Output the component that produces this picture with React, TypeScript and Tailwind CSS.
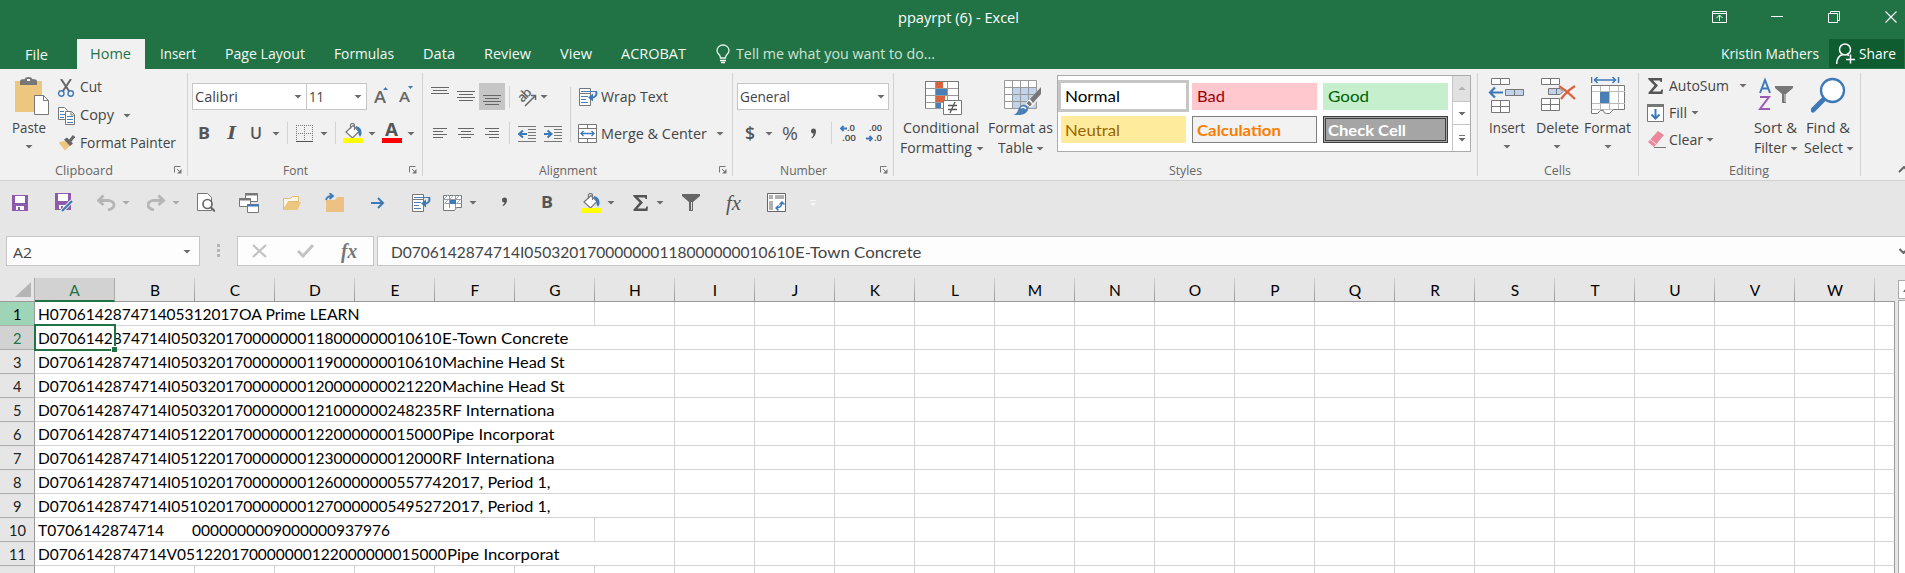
import React, { useLayoutEffect, useRef } from 'react';

function Fit({ w, className = '', children }: { w: number; className?: string; children: React.ReactNode }) {
  const ref = useRef<HTMLSpanElement>(null);
  useLayoutEffect(() => {
    const el = ref.current;
    if (!el) return;
    el.style.transform = 'none';
    const natural = el.getBoundingClientRect().width;
    if (natural > 0) el.style.transform = `scaleX(${w / natural})`;
  }, [w, children]);
  return (
    <span className={`block h-5 shrink-0 leading-5 whitespace-pre ${className}`} style={{ width: w }}>
      <span ref={ref} className="inline-block origin-left">{children}</span>
    </span>
  );
}

type SvgProps = { box: string; className?: string; children: React.ReactNode };
function Icon({ box, className = '', children }: SvgProps) {
  const [, , w, h] = box.split(' ');
  return (
    <svg width={w} height={h} viewBox={box} fill="none" className={`block shrink-0 ${className}`}>
      {children}
    </svg>
  );
}

function Arrow({ className = '' }: { className?: string }) {
  return (
    <svg width="6" height="3" viewBox="0 0 6 3" className={`block shrink-0 overflow-visible text-[#6a6a6a] ${className}`}>
      <path d="M-.500 0h7L3 3.600z" fill="currentColor" />
    </svg>
  );
}

function Sep({ className = '' }: { className?: string }) {
  return <div className={`w-px shrink-0 bg-[#d2d2d2] ${className}`} />;
}

function Launcher({ className = '' }: { className?: string }) {
  return (
    <Icon box="0 0 8 8" className={className}>
      <path d="M.5 6.500V.5H6.500M3 3l3 3" stroke="#777" />
      <path d="M7.500 3v4.500H3z" fill="#777" />
    </Icon>
  );
}

function Bucket({ className = '' }: { className?: string }) {
  return (
    <Icon box="343 123 20 20" className={className}>
      <path d="M346 132l7-6.500 6 6-6.500 6.500z" fill="#fff" stroke="#777" strokeWidth="1.200" />
      <path d="M350.500 129v-4q0-1.500 2-1.500t2 1.500v5" stroke="#777" strokeWidth="1.200" />
      <path d="M356 126q6 1 5.500 8l-1.500 3-1.500-3q.5-4-2.500-6z" fill="#3d79b8" />
      <path d="M343 138h20v5h-20z" fill="#ff0" />
    </Icon>
  );
}

function WrapIcon({ className = '' }: { className?: string }) {
  return (
    <Icon box="579 87 19 18" className={className}>
      <path d="M579.500 87.500h11v5h-11zM579.500 92.500h11v12h-11z" fill="#fff" stroke="#777" />
      <path d="M581 90.500h15M581 95.500h7M581 98.500h5M581 101.500h7" stroke="#4a7fb5" />
      <path d="M596 90q2 6-5 7" stroke="#3d79b8" strokeWidth="2" />
      <path d="M588 96.500l5-4v8z" fill="#3d79b8" />
    </Icon>
  );
}

function Sigma({ className = '' }: { className?: string }) {
  return (
    <Icon box="1648 77 15 16" className={className}>
      <path d="M1648 77h14v4h-1.500l-.5-1.500h-7l5 5-5.500 6h8l1-2h1.500l-.5 4.500h-14v-1.500l6-7-6-6z" fill="#555" />
    </Icon>
  );
}

function Lines({ box, d, className = '' }: { box: string; d: string; className?: string }) {
  return (
    <Icon box={box} className={className}>
      <path d={d} stroke="#666" />
    </Icon>
  );
}

const label = 'text-[13.500px] text-[#666]';

function TitleBar() {
  return (
    <div className="flex h-[39px] items-start bg-[#217346] text-white">
      <Fit w={121} className="mt-[8px] ml-[898px] text-[14.500px]">ppayrpt (6) - Excel</Fit>
      <Icon box="1712 11 15 12" className="mt-[11px] ml-[693px]">
        <path d="M1712.500 11.500h14v11h-14zM1712.500 13.500h14M1719.500 21v-6M1716.500 18l3-3 3 3" stroke="#fff" />
      </Icon>
      <Icon box="1771 16 12 1" className="mt-[16px] ml-[44px]">
        <path d="M1771 16.500h12" stroke="#fff" />
      </Icon>
      <Icon box="1828 11 12 12" className="mt-[11px] ml-[45px]">
        <path d="M1828.500 13.500h9v9h-9zM1830.500 13.500v-2h9v9h-2" stroke="#fff" />
      </Icon>
      <Icon box="1885 11 12 12" className="mt-[11px] ml-[45px]">
        <path d="M1885.500 11.500l11 11M1896.500 11.500l-11 11" stroke="#fff" strokeWidth="1.100" />
      </Icon>
    </div>
  );
}

function Tabs() {
  return (
    <div className="flex h-[30px] items-center bg-[#217346] text-[14.500px] text-[#f3f8f5]">
      <Fit w={23} className="mt-[2px] ml-[25px]">File</Fit>
      <div className="ml-[29px] flex h-full w-[68px] items-center bg-[#f1f1f1] text-[#217346]">
        <Fit w={41} className="ml-[13px]">Home</Fit>
      </div>
      <Fit w={36} className="ml-[15px]">Insert</Fit>
      <Fit w={80} className="ml-[29px]">Page Layout</Fit>
      <Fit w={60} className="ml-[29px]">Formulas</Fit>
      <Fit w={32} className="ml-[29px]">Data</Fit>
      <Fit w={47} className="ml-[29px]">Review</Fit>
      <Fit w={32} className="ml-[29px]">View</Fit>
      <Fit w={65} className="ml-[29px]">ACROBAT</Fit>
      <Icon box="716 44 14 20" className="ml-[30px]">
        <path d="M720.500 58q0-2-1.500-3.500-2-2-2-4a6 5.500 0 0 1 12 0q0 2-2 4-1.500 1.500-1.500 3.500z" stroke="#e8f2ec" strokeWidth="1.300" />
        <path d="M720 60.500h6M721 62.500h4" stroke="#fff" strokeWidth="1.500" />
      </Icon>
      <Fit w={199} className="ml-[6px] text-[#cfe3d7]">Tell me what you want to do...</Fit>
      <Fit w={98} className="ml-[786px]">Kristin Mathers</Fit>
      <div className="mb-px ml-[10px] flex h-[29px] w-[75px] items-center bg-[#0e5c2f] text-white">
        <Icon box="1836 42 19 22" className="ml-[7px]">
          <circle cx="1845" cy="48.500" r="5.500" stroke="#fff" strokeWidth="1.500" />
          <path d="M1836.700 63q0-8 6.300-9.500M1850.500 53.500v9M1846 58.500h9M1847 53q1 .5 1.500 2" stroke="#fff" strokeWidth="1.500" />
        </Icon>
        <Fit w={37} className="mt-px ml-[4px]">Share</Fit>
      </div>
    </div>
  );
}

function Clipboard() {
  return (
    <section className="flex w-[187px] shrink-0 flex-col">
      <div className="flex h-[91px]">
        <div className="w-[58px]">
          <Icon box="15 77 34 38" className="mt-[8px] ml-[15px]">
            <path d="M15 81h27v31H15z" fill="#edc67f" />
            <path d="M20 81q0-2 5-2 0-2 3.500-2t3.500 2q5 0 5 2v4H20z" fill="#777" />
            <path d="M27 79h3v2h-3z" fill="#fff" />
            <path d="M34.500 95.500h9l5 5v14h-14z" fill="#fff" stroke="#777" />
            <path d="M43.500 95.500v5h5" stroke="#777" />
          </Icon>
          <Fit w={34} className="mt-[3px] ml-[12px]">Paste</Fit>
          <Arrow className="mt-[7px] ml-[26px]" />
        </div>
        <div className="flex flex-col pt-[4px]">
          <div className="flex h-7 items-center">
            <Icon box="58 77 17 18" className="mt-[2px]">
              <path d="M61 77l8 12M71 77l-8 12" stroke="#666" strokeWidth="2" />
              <circle cx="61.300" cy="91.500" r="2.700" stroke="#3d79b8" strokeWidth="1.400" />
              <circle cx="70.700" cy="91.500" r="2.700" stroke="#3d79b8" strokeWidth="1.400" />
            </Icon>
            <Fit w={22} className="ml-[5px]">Cut</Fit>
          </div>
          <div className="flex h-7 items-center">
            <Icon box="58 105 17 18" className="mt-px">
              <path d="M58.500 105.500h6l3 3v9h-9z" fill="#fff" stroke="#777" />
              <path d="M60 109.500h4M60 112.500h5M60 115.500h4" stroke="#4a7fb5" />
              <path d="M65.500 109.500h6l3 3v10h-9z" fill="#fff" stroke="#777" />
              <path d="M71 110v3h3" stroke="#777" />
              <path d="M67 114.500h6M67 117.500h6M67 120.500h6" stroke="#4a7fb5" />
            </Icon>
            <Fit w={34} className="ml-[5px]">Copy</Fit>
            <Arrow className="ml-[10px]" />
          </div>
          <div className="flex h-7 items-center">
            <Icon box="58 134 17 16" className="-mt-px">
              <path d="M58.500 141.500l7-2 5 5-5.500 5z" fill="#edc67f" />
              <path d="M64 138.500l3-2 6 6-3 2.500z" fill="#666" />
              <path d="M70 140l4-5" stroke="#666" strokeWidth="3" />
            </Icon>
            <Fit w={96} className="ml-[5px]">Format Painter</Fit>
          </div>
        </div>
      </div>
      <div className="flex h-5 items-center">
        <Fit w={58} className={`ml-[55px] ${label}`}>Clipboard</Fit>
        <Launcher className="ml-[61px]" />
      </div>
    </section>
  );
}

function FontGroup() {
  return (
    <section className="flex w-[234px] shrink-0 flex-col">
      <div className="h-[91px] pt-[14px] pl-[4px]">
        <div className="flex h-[27px] items-center">
          <div className="flex h-full w-[115px] items-center border border-[#c6c6c6] bg-white">
            <Fit w={43} className="ml-[2px]">Calibri</Fit>
            <Arrow className="ml-[57px]" />
          </div>
          <div className="-ml-px flex h-full w-[61px] items-center border border-[#c6c6c6] bg-white">
            <Fit w={15} className="ml-[2px]">11</Fit>
            <Arrow className="ml-[31px]" />
          </div>
          <div className="ml-[7px] flex">
            <Fit w={12} className="text-[15.500px] font-semibold text-[#666]">A</Fit>
            <Icon box="0 0 5 3" className="-ml-[3px]"><path d="M0 3h5L2.500 0z" fill="#3d79b8" /></Icon>
          </div>
          <div className="ml-[11px] flex">
            <Fit w={11} className="mt-px text-[14.500px] font-semibold text-[#666]">A</Fit>
            <Icon box="0 0 5 3" className="-ml-[2px]"><path d="M0 0h5L2.500 3z" fill="#3d79b8" /></Icon>
          </div>
        </div>
        <div className="mt-[12px] flex h-[22px] items-center">
          <Fit w={12} className="ml-[6px] text-[16px] font-bold text-[#555]">B</Fit>
          <Fit w={9} className="ml-[17px] font-['Liberation_Serif',serif] text-[18px] font-bold text-[#555] italic">I</Fit>
          <Fit w={12} className="ml-[14px] text-[16px] font-semibold text-[#555] underline underline-offset-2">U</Fit>
          <Arrow className="ml-[11px]" />
          <Sep className="ml-[8px] h-[22px]" />
          <Icon box="296 124 17 17" className="ml-[8px]">
            <path d="M296.500 124v16M304.500 124v16M312.500 124v16M296 124.500h17M296 132.500h17" stroke="#777" strokeDasharray="1 1" />
            <path d="M296 140.500h17" stroke="#555" />
          </Icon>
          <Arrow className="ml-[8px]" />
          <Sep className="ml-[8px] h-[22px]" />
          <Bucket className="ml-[7px]" />
          <Arrow className="ml-[6px]" />
          <div className="ml-[7px] flex h-[20px] w-5 flex-col">
            <div className="h-[15px] pl-[3px]">
              <Fit w={13} className="-mt-[3px] text-[17px] font-bold text-[#555]">A</Fit>
            </div>
            <div className="h-[5px] w-5 bg-[#ff0000]" />
          </div>
          <Arrow className="ml-[6px]" />
        </div>
      </div>
      <div className="flex h-5 items-center">
        <Fit w={25} className={`ml-[95px] ${label}`}>Font</Fit>
        <Launcher className="ml-[101px]" />
      </div>
    </section>
  );
}

function Alignment() {
  return (
    <section className="flex w-[309px] shrink-0 flex-col">
      <div className="flex h-[91px]">
        <div className="w-[147px] pt-[14px]">
          <div className="flex h-[27px] items-center">
            <Lines box="431 83 18 27" className="ml-[8px]" d="M431 87.500h18M433 90.500h14M431 93.500h18" />
            <Lines box="457 83 18 27" className="ml-[8px]" d="M457 91.500h18M459 94.500h14M457 97.500h18M459 100.500h14" />
            <div className="ml-[4px] h-[27px] w-[26px] bg-[#c6c6c6]">
              <Lines box="479 83 26 27" d="M483 95.500h18M485 98.500h14M483 101.500h18M485 104.500h14" />
            </div>
            <Sep className="ml-[4px] h-[22px]" />
            <Icon box="517 85 20 20" className="ml-[7px] overflow-visible">
              <text x="0" y="0" transform="translate(522.5 101) rotate(-45)" fontSize="13" fontWeight="600" fill="#666" textLength="14">ab</text>
              <path d="M525 104l10-10M531 93.500h4.500v4.500" stroke="#666" strokeWidth="1.500" />
            </Icon>
            <Arrow className="ml-[4px]" />
          </div>
          <div className="mt-[12px] flex h-[22px] items-center">
            <Lines box="433 122 14 22" className="ml-[10px]" d="M433 128.500h14M433 131.500h10M433 134.500h14M433 137.500h10" />
            <Lines box="458 122 16 22" className="ml-[11px]" d="M458 128.500h16M461 131.500h10M458 134.500h16M461 137.500h10" />
            <Lines box="485 122 14 22" className="ml-[11px]" d="M485 128.500h14M489 131.500h10M485 134.500h14M489 137.500h10" />
            <Sep className="ml-[10px] h-[22px]" />
            <Icon box="518 124 18 17" className="ml-[8px]">
              <path d="M518 125.500h18M528 128.500h8M528 131.500h8M528 134.500h8M528 137.500h8M518 140.500h18" stroke="#777" />
              <path d="M520 133h7M523 129.500l-4 3.500 4 3.500" stroke="#3d79b8" strokeWidth="2" />
            </Icon>
            <Icon box="544 124 18 17" className="ml-[8px]">
              <path d="M544 125.500h18M554 128.500h8M554 131.500h8M554 134.500h8M554 137.500h8M544 140.500h18" stroke="#777" />
              <path d="M544 133h7M547.500 129.500l4 3.500-4 3.500" stroke="#3d79b8" strokeWidth="2" />
            </Icon>
          </div>
        </div>
        <Sep className="mt-[18px] h-[55px]" />
        <div className="pt-[14px]">
          <div className="flex h-[27px] items-center">
            <WrapIcon className="ml-[8px]" />
            <Fit w={67} className="ml-[3px]">Wrap Text</Fit>
          </div>
          <div className="mt-[12px] flex h-[22px] items-center">
            <Icon box="578 123 19 19" className="ml-[7px]">
              <path d="M578.500 123.500h18v18h-18zM578.500 127.500h18M578.500 137.500h18M587.500 123.500v4M587.500 137.500v4" fill="#fff" stroke="#777" />
              <path d="M581 132.500h13M583.500 130l-2.500 2.500 2.500 2.500M591.500 130l2.500 2.500-2.500 2.500" stroke="#3d79b8" strokeWidth="1.300" />
            </Icon>
            <Fit w={106} className="mt-[2px] ml-[4px]">Merge &amp; Center</Fit>
            <Arrow className="ml-[10px]" />
          </div>
        </div>
      </div>
      <div className="flex h-5 items-center">
        <Fit w={58} className={`ml-[116px] ${label}`}>Alignment</Fit>
        <Launcher className="ml-[122px]" />
      </div>
    </section>
  );
}

function NumberGroup() {
  return (
    <section className="flex w-[160px] shrink-0 flex-col">
      <div className="h-[91px] pt-[14px]">
        <div className="ml-[4px] flex h-[27px] w-[152px] items-center border border-[#c6c6c6] bg-white">
          <Fit w={50} className="ml-[2px]">General</Fit>
          <Arrow className="ml-[88px]" />
        </div>
        <div className="mt-[12px] flex h-[22px] items-center">
          <Fit w={10} className="ml-[12px] text-[18px] font-semibold text-[#555]">$</Fit>
          <Arrow className="ml-[11px]" />
          <Fit w={16} className="ml-[10px] text-[18px] text-[#555]">%</Fit>
          <Icon box="812 127 6 11" className="ml-[13px]">
            <path d="M812 130a2.500 2.500 0 0 1 5 0q0 5-4 7.500l-.5-1q2-1.500 2-4-2.500 0-2.500-2.500z" fill="#555" />
          </Icon>
          <Sep className="ml-[14px] h-[22px]" />
          <div className="ml-[8px] flex h-[19px] w-[16px] flex-col justify-between">
            <div className="flex h-[9px] items-center">
              <Icon box="0 0 7 7"><path d="M1 3.500h6M3.500 1L1 3.500 3.500 6" stroke="#3d79b8" strokeWidth="1.800" /></Icon>
              <Fit w={8} className="text-[9.500px] font-semibold">.0</Fit>
            </div>
            <div className="flex h-[9px] items-center">
              <Fit w={14} className="ml-[2px] text-[9.500px] font-semibold">.00</Fit>
            </div>
          </div>
          <div className="ml-[10px] flex h-[19px] w-[16px] flex-col justify-between">
            <div className="flex h-[9px] items-center">
              <Fit w={13} className="ml-[3px] text-[9.500px] font-semibold">.00</Fit>
            </div>
            <div className="flex h-[9px] items-center">
              <Icon box="0 0 7 7"><path d="M0 3.500h6M3.500 1L6 3.500 3.500 6" stroke="#3d79b8" strokeWidth="1.800" /></Icon>
              <Fit w={8} className="ml-px text-[9.500px] font-semibold">.0</Fit>
            </div>
          </div>
        </div>
      </div>
      <div className="flex h-5 items-center">
        <Fit w={47} className={`ml-[47px] ${label}`}>Number</Fit>
        <Launcher className="ml-[53px]" />
      </div>
    </section>
  );
}

function Styles() {
  return (
    <section className="flex w-[583px] shrink-0 flex-col">
      <div className="flex h-[91px]">
        <div className="w-[92px]">
          <Icon box="925 80 37 35" className="mt-[11px] ml-[31px]">
            <path d="M925.500 81.500h33v27h-33z" fill="#fff" />
            <path d="M936 82h7v7h-7zM936 96h9v6h-9z" fill="#d9623f" />
            <path d="M936 89h11v6h-11zM936 102h5v6h-5z" fill="#4a7fb5" />
            <path d="M925.500 81.500h33v27h-33zM925.500 88.500h33M925.500 95.500h33M925.500 102.500h33M935.500 81v27M947.500 81v27" stroke="#999" />
            <path d="M925.500 108.500v-27h33v19" stroke="#777" />
            <path d="M943.500 100.500h18v14h-18z" fill="#fff" stroke="#777" />
            <path d="M948 105.500h9M948 109.500h9M955 102l-5 11" stroke="#555" strokeWidth="1.300" />
          </Icon>
          <Fit w={76} className="mt-[3px] ml-[9px]">Conditional</Fit>
          <div className="flex items-center">
            <Fit w={72} className="ml-[6px]">Formatting</Fit>
            <Arrow className="ml-[5px]" />
          </div>
        </div>
        <div className="w-[71px]">
          <Icon box="1004 80 38 35" className="mt-[11px] ml-[18px]">
            <path d="M1004.500 80.500h32v28h-32z" fill="#fff" />
            <path d="M1013 87h24v22h-24z" fill="#c0d3ea" />
            <path d="M1004.500 80.500h32v28h-32zM1004.500 87.500h32M1004.500 94.500h32M1004.500 101.500h32M1012.500 80v28M1020.500 80v28M1028.500 80v28" stroke="#999" />
            <path d="M1026 105l15-19v10l-9 11z" fill="#f1f1f1" />
            <path d="M1041 87v7l-8 9-3-4z" fill="#777" />
            <path d="M1029 100l3.500 4-2.500 3-4-3.500z" fill="#777" stroke="#fff" />
            <path d="M1013 115q4-1 5.500-6 2-5 7-4 4 2 2 6-3 5-14.500 4z" fill="#4a7fb5" />
            <path d="M1021 108q3-2 5 1" stroke="#fff" strokeWidth="1.500" />
          </Icon>
          <Fit w={65} className="mt-[3px] ml-[2px]">Format as</Fit>
          <div className="flex items-center">
            <Fit w={35} className="ml-[12px]">Table</Fit>
            <Arrow className="ml-[4px]" />
          </div>
        </div>
        <div className="mt-[6px] flex h-[77px] w-[414px] border border-[#ababab] bg-white font-['Lato',sans-serif] text-[16px]">
          <div className="w-[394px] pt-[4px]">
            <div className="flex h-[32px] items-center">
              <div className="flex h-[32px] w-[131px] items-center border-[3px] border-[#c6c6c6] bg-white text-black">
                <Fit w={55} className="ml-[4px]">Normal</Fit>
              </div>
              <div className="ml-[3px] flex h-[27px] w-[125px] items-center bg-[#ffc7ce] text-[#9c0006]">
                <Fit w={28} className="ml-[5px]">Bad</Fit>
              </div>
              <div className="ml-[6px] flex h-[27px] w-[125px] items-center bg-[#c6efce] text-[#006100]">
                <Fit w={41} className="ml-[5px]">Good</Fit>
              </div>
            </div>
            <div className="mt-[4px] ml-[3px] flex h-[27px] items-center">
              <div className="flex h-[27px] w-[125px] items-center bg-[#ffeb9c] text-[#9c6500]">
                <Fit w={55} className="ml-[4px]">Neutral</Fit>
              </div>
              <div className="ml-[6px] flex h-[27px] w-[125px] items-center border border-[#7f7f7f] bg-[#f2f2f2] text-[#fa7d00]">
                <Fit w={84} className="ml-[4px] font-bold">Calculation</Fit>
              </div>
              <div className="ml-[6px] flex h-[27px] w-[125px] items-center border-[3px] border-double border-[#3f3f3f] bg-[#a5a5a5] text-white">
                <Fit w={78} className="ml-[2px] font-bold">Check Cell</Fit>
              </div>
            </div>
          </div>
          <div className="flex w-[18px] shrink-0 flex-col border-l border-[#c6c6c6]">
            <div className="flex h-[26px] items-center justify-center border-b border-[#c6c6c6] bg-[#e1e1e1]">
              <Arrow className="rotate-180 opacity-40" />
            </div>
            <div className="flex h-[23px] items-center justify-center border-b border-[#c6c6c6]">
              <Arrow />
            </div>
            <div className="flex h-[26px] flex-col items-center justify-center gap-[2px]">
              <div className="h-px w-[6px] bg-[#777]" />
              <Arrow />
            </div>
          </div>
        </div>
      </div>
      <div className="flex h-5 items-center">
        <Fit w={33} className={`ml-[275px] ${label}`}>Styles</Fit>
      </div>
    </section>
  );
}

function Cells() {
  return (
    <section className="flex w-[160px] shrink-0 flex-col">
      <div className="flex h-[91px]">
        <div className="w-[55px]">
          <Icon box="1488 77 36 38" className="mt-[8px] ml-[10px]">
            <path d="M1491.500 78.500h18v6h-18zM1500.500 78v6M1491.500 100.500h18v12h-18zM1491.500 106.500h18M1500.500 100v12" fill="#fff" stroke="#777" />
            <path d="M1505.500 89.500h18v6h-18zM1514.500 89v6" fill="#c0d3ea" stroke="#777" />
            <path d="M1490 92.500h13M1495 87.500l-5 5 5 5" stroke="#3d79b8" strokeWidth="2.200" />
          </Icon>
          <Fit w={36} className="mt-[3px] ml-[11px]">Insert</Fit>
          <Arrow className="mt-[7px] ml-[26px]" />
        </div>
        <div className="w-[50px]">
          <Icon box="1541 77 36 38" className="mt-[8px] ml-[8px]">
            <path d="M1541.500 78.500h18v6h-18zM1550.500 78v6M1541.500 98.500h18v12h-18zM1541.500 104.500h18M1550.500 98v12" fill="#fff" stroke="#777" />
            <path d="M1560 88.500h-11.500v6h11.500l3-3zM1556.500 88v6" fill="#c0d3ea" stroke="#777" />
            <path d="M1559 86q8 5 16 13M1575 86q-8 5-14 13" stroke="#d9623f" strokeWidth="2.200" />
          </Icon>
          <Fit w={43} className="mt-[3px] ml-[3px]">Delete</Fit>
          <Arrow className="mt-[7px] ml-[21px]" />
        </div>
        <div className="w-[50px]">
          <Icon box="1591 77 34 38" className="mt-[8px] ml-[8px]">
            <path d="M1591.500 77v6M1618.500 77v6M1594 80h22M1597.500 77l-3 3 3 3M1612.500 77l3 3-3 3" stroke="#3d79b8" strokeWidth="1.500" />
            <path d="M1591.500 85.500h33v24h-33z" fill="#fff" stroke="#777" />
            <path d="M1600.500 86v23M1609.500 86v23M1618.500 86v23M1592 91.500h33M1592 103.500h33" stroke="#bbb" />
            <path d="M1600 92h9v11h-9z" fill="#4a7fb5" />
            <path d="M1591.500 109.500v4h6l3-3h3q0 3 3 3h3l4-4" fill="#fff" stroke="#777" />
          </Icon>
          <Fit w={47} className="mt-[3px] ml-px">Format</Fit>
          <Arrow className="mt-[7px] ml-[22px]" />
        </div>
      </div>
      <div className="flex h-5 items-center">
        <Fit w={27} className={`ml-[66px] ${label}`}>Cells</Fit>
      </div>
    </section>
  );
}

function Editing() {
  return (
    <section className="flex w-[221px] shrink-0 flex-col">
      <div className="flex h-[91px]">
        <div className="flex w-[115px] flex-col pt-[3px]">
          <div className="flex h-[27px] items-center">
            <Sigma className="ml-[9px]" />
            <Fit w={60} className="ml-[6px]">AutoSum</Fit>
            <Arrow className="ml-[11px]" />
          </div>
          <div className="flex h-[27px] items-center">
            <Icon box="1647 103 17 18" className="ml-[8px]">
              <path d="M1647.500 103.500h16v17h-16z" fill="#fff" stroke="#777" />
              <path d="M1647 103h17v3h-17z" fill="#777" />
              <path d="M1655.500 108v9M1651.500 113.500l4 4 4-4" stroke="#3d79b8" strokeWidth="2" />
            </Icon>
            <Fit w={18} className="ml-[5px]">Fill</Fit>
            <Arrow className="ml-[5px]" />
          </div>
          <div className="flex h-[27px] items-center">
            <Icon box="1648 130 18 17" className="ml-[9px]">
              <path d="M1648 141l10-11 6 4-10 12z" fill="#e8889a" />
              <path d="M1650 138.500l6 4.500" stroke="#f8dfe3" />
              <path d="M1654 146.500h12" stroke="#777" />
            </Icon>
            <Fit w={34} className="ml-[3px]">Clear</Fit>
            <Arrow className="ml-[4px]" />
          </div>
        </div>
        <div className="w-[49px]">
          <Icon box="1758 77 36 38" className="mt-[8px] ml-[4px]">
            <path d="M1760 93l5-13 5 13M1761.500 88.500h7" stroke="#3d79b8" strokeWidth="2" />
            <path d="M1760 97h9l-9 12h10" stroke="#9b59b6" strokeWidth="2" />
            <path d="M1775 86h18v2l-7 6v9h-4v-9l-7-6z" fill="#777" />
            <path d="M1785 94v8" stroke="#ddd" />
          </Icon>
          <Fit w={43} className="mt-[3px]">Sort &amp;</Fit>
          <div className="flex items-center">
            <Fit w={33}>Filter</Fit>
            <Arrow className="ml-[4px]" />
          </div>
        </div>
        <div className="w-[52px]">
          <Icon box="1811 77 36 38" className="mt-[8px] ml-[8px]">
            <path d="M1813 110l11-11" stroke="#3d79b8" strokeWidth="5" strokeLinecap="round" />
            <circle cx="1832.500" cy="90.500" r="11.500" fill="#fff" stroke="#3d79b8" strokeWidth="2.300" />
          </Icon>
          <Fit w={44} className="mt-[3px] ml-[3px]">Find &amp;</Fit>
          <div className="flex items-center">
            <Fit w={39} className="ml-px">Select</Fit>
            <Arrow className="ml-[4px]" />
          </div>
        </div>
      </div>
      <div className="flex h-5 items-center">
        <Fit w={40} className={`ml-[90px] ${label}`}>Editing</Fit>
      </div>
    </section>
  );
}

function Ribbon() {
  const sep = 'mt-[4px] h-[103px]';
  return (
    <div className="flex h-[112px] border-b border-[#d2d2d2] bg-[#f1f1f1] text-[14.500px] text-[#444]">
      <Clipboard /><Sep className={sep} />
      <FontGroup /><Sep className={sep} />
      <Alignment /><Sep className={sep} />
      <NumberGroup /><Sep className={sep} />
      <Styles /><Sep className={sep} />
      <Cells /><Sep className={sep} />
      <Editing /><Sep className={sep} />
      <Icon box="1898 166 7 8" className="mt-[97px] ml-[37px]">
        <path d="M1899 172l5-5 5 5" stroke="#666" strokeWidth="2" />
      </Icon>
    </div>
  );
}

function QuickAccess() {
  return (
    <div className="flex h-[43px] items-center text-[#555]">
      <Icon box="12 194 16 16" className="ml-[12px]">
        <path d="M12 194h16v16H12z" fill="#8e5bab" />
        <path d="M15 195h10v7H15zM16 205h8v4h-8z" fill="#fff" />
        <path d="M18 206h2v3h-2z" fill="#8e5bab" />
      </Icon>
      <Icon box="55 193 18 19" className="ml-[27px]">
        <path d="M55 193h16v17H55z" fill="#8e5bab" />
        <path d="M58 194h10v7H58zM59 205h6v4h-6z" fill="#fff" />
        <path d="M61 206h2v3h-2z" fill="#8e5bab" />
        <path d="M62 211l10-10" stroke="#e6e6e6" strokeWidth="4" />
        <path d="M62 211l10-10" stroke="#3d79b8" strokeWidth="2.200" />
      </Icon>
      <Icon box="97 194 19 17" className="ml-[24px]">
        <path d="M98 200.500h11q5 1 5 4.500t-6 5M103.500 195.500l-5 5 5 4.500" stroke="#b5b5b5" strokeWidth="2.800" />
      </Icon>
      <Arrow className="ml-[7px] opacity-50" />
      <Icon box="147 194 19 17" className="ml-[18px]">
        <path d="M164 200.500h-11q-5 1-5 4.500t6 5M158.500 195.500l5 5-5 4.500" stroke="#b5b5b5" strokeWidth="2.800" />
      </Icon>
      <Arrow className="ml-[7px] opacity-50" />
      <Icon box="197 193 18 19" className="ml-[18px]">
        <path d="M197.500 193.500h10l4 4v13h-14z" fill="#fff" stroke="#777" />
        <circle cx="207.500" cy="204" r="4.500" fill="#fff" stroke="#666" strokeWidth="1.700" />
        <path d="M211 207.500l4 4" stroke="#666" strokeWidth="2" />
      </Icon>
      <Icon box="239 192 20 20" className="ml-[24px]">
        <path d="M245.500 192.500h12v8h-12z" fill="#fff" stroke="#777" /><path d="M245 193.500h13" stroke="#777" strokeWidth="2" />
        <path d="M239.500 197.500h11v8h-11z" fill="#fff" stroke="#777" /><path d="M239 198.500h12" stroke="#777" strokeWidth="2" />
        <path d="M247.500 203.500h11v8h-11z" fill="#fff" stroke="#777" /><path d="M247 204.500h12" stroke="#3d79b8" strokeWidth="2" />
      </Icon>
      <Icon box="283 195 18 14" className="ml-[24px]">
        <path d="M283.500 208.500v-11h7l2-2h6v5h-10z" fill="#fdf6e8" stroke="#e3b96f" />
        <path d="M287.500 201h13.500l-3.500 8H284z" fill="#edc67f" />
      </Icon>
      <Icon box="325 192 19 19" className="ml-[24px]">
        <path d="M326 199h9l2-3h7v15h-18z" fill="#edc184" />
        <path d="M326 199q1-4 6-4M329.500 192l3.500 3-3.500 3" stroke="#3d79b8" strokeWidth="1.800" />
      </Icon>
      <Icon box="371 196 14 12" className="ml-[27px]">
        <path d="M371 202h12M378 197l5 5-5 5" stroke="#3d79b8" strokeWidth="2" />
      </Icon>
      <WrapIcon className="ml-[27px]" />
      <Icon box="443 193 19 18" className="ml-[12px]">
        <path d="M443.500 194.500h18v12h-5l-2 3h-11z" fill="#fff" stroke="#777" />
        <path d="M449.500 194v13M455.500 194v13M443 198.500h19M443 202.500h19" stroke="#999" />
        <path d="M450 199h6v4h-6z" fill="#3d79b8" />
        <path d="M444 198l4-4M450 198l4-4M456 198l4-4M444 203l4-4M456 203l4-4" stroke="#9ab8dc" />
      </Icon>
      <Arrow className="ml-[8px]" />
      <Icon box="812 127 6 11" className="ml-[26px]">
        <path d="M812 130a2.500 2.500 0 0 1 5 0q0 4-4 6l-.5-1q2-1 2-2.500-2.500 0-2.500-2.500z" fill="#555" />
      </Icon>
      <Fit w={12} className="-mt-px ml-[33px] text-[16.500px] font-bold">B</Fit>
      <Bucket className="ml-[28px]" />
      <Arrow className="ml-[7px]" />
      <Sigma className="ml-[19px]" />
      <Arrow className="ml-[9px]" />
      <Icon box="682 194 18 17" className="ml-[19px]">
        <path d="M682 194h18v2l-7 6v9h-4v-9l-7-6z" fill="#666" />
        <path d="M691.500 202v8" stroke="#ddd" />
      </Icon>
      <Fit w={15} className="ml-[26px] font-['Liberation_Serif',serif] text-[20px] italic">fx</Fit>
      <Icon box="767 192 19 19" className="ml-[26px]">
        <path d="M767.500 192.500h18v18h-18z" fill="#fff" stroke="#666" />
        <path d="M769 194h4v4h-4zM775 194h9v4h-9zM769 200h4v9h-4z" fill="#b0b0b0" />
        <path d="M776 207q6 0 6-6M778.500 204.500l-2.500 2.500 2.500 2.500M779.500 203.500l2.500-2.500 2.500 2.500" stroke="#3d79b8" strokeWidth="1.400" />
      </Icon>
      <Icon box="0 0 6 6" className="ml-[24px]">
        <path d="M0 .5h6" stroke="#f6f6f6" /><path d="M0 3h6L3 6z" fill="#f6f6f6" />
      </Icon>
    </div>
  );
}

type Part = [text: string, width: number];

/* One fixed-width payment record: type, date, sequence, twelve-digit amount and payee. */
const record = (type: string, date: string, seq: string, amount: string, payee: string, payeeWidth: number): Part[] => [
  [`D0706142874714${type}${date}0000000${seq}${amount}`, type === 'V' ? 408.5 : 403.5],
  [payee, payeeWidth],
];

const activeCell = record('I', '05032017', '118', '000000010610', 'E-Town Concrete', 126.5);

function CellText({ parts }: { parts: Part[] }) {
  return (
    <>
      {parts.map(([text, w]) => (
        <Fit key={text} w={w} className="[font-variant-ligatures:none]">{text}</Fit>
      ))}
    </>
  );
}

function FormulaBar() {
  return (
    <div className="mt-[12px] flex h-[30px] text-[15.500px] text-[#444]">
      <div className="ml-[6px] flex w-[194px] items-center border border-[#c6c6c6] bg-[#fdfdfd]">
        <Fit w={19} className="mt-px ml-[6px] text-[15px]">A2</Fit>
        <Arrow className="ml-[152px]" />
      </div>
      <div className="mt-[8px] ml-[17px] flex flex-col gap-[2px]">
        <div className="size-[3px] bg-[#b5b5b5]" />
        <div className="size-[3px] bg-[#b5b5b5]" />
        <div className="size-[3px] bg-[#b5b5b5]" />
      </div>
      <div className="ml-[17px] flex w-[137px] items-center border border-[#c6c6c6] bg-[#fdfdfd]">
        <Icon box="252 244 15 14" className="ml-[14px]">
          <path d="M253 245l13 12M266 245l-13 12" stroke="#c3c3c3" strokeWidth="2.200" />
        </Icon>
        <Icon box="297 244 17 14" className="ml-[30px]">
          <path d="M298 251l5 5 10-11" stroke="#c3c3c3" strokeWidth="3" />
        </Icon>
        <Fit w={16} className="ml-[27px] font-['Liberation_Serif',serif] text-[20px] font-bold text-[#777] italic">fx</Fit>
      </div>
      <div className="ml-[3px] flex w-[1528px] items-center border border-r-0 border-[#c6c6c6] bg-[#fdfdfd]">
        <div className="mt-px ml-[13px] flex w-[530px] font-['Lato',sans-serif]">
          <CellText parts={activeCell} />
        </div>
        <Icon box="1899 248 6 6" className="ml-[978px]">
          <path d="M1899.500 249l4 4 4-4" stroke="#666" strokeWidth="2" />
        </Icon>
      </div>
    </div>
  );
}

const columns = 'ABCDEFGHIJKLMNOPQRSTUVW'.split('');

type SheetRow = { n: number; parts: Part[]; spill: number };
const rows: SheetRow[] = [
  { n: 1, parts: [['H070614287471405312017', 200.5], ['OA Prime LEARN', 120.5]], spill: 7 },
  { n: 2, parts: activeCell, spill: 8 },
  { n: 3, parts: record('I', '05032017', '119', '000000010610', 'Machine Head St', 122.5), spill: 8 },
  { n: 4, parts: record('I', '05032017', '120', '000000021220', 'Machine Head St', 122.5), spill: 8 },
  { n: 5, parts: record('I', '05032017', '121', '000000248235', 'RF Internationa', 112.5), spill: 8 },
  { n: 6, parts: record('I', '05122017', '122', '000000015000', 'Pipe Incorporat', 112.5), spill: 8 },
  { n: 7, parts: record('I', '05122017', '123', '000000012000', 'RF Internationa', 112.5), spill: 8 },
  { n: 8, parts: record('I', '05102017', '126', '000000055774', '2017, Period 1,', 108.5), spill: 8 },
  { n: 9, parts: record('I', '05102017', '127', '000000549527', '2017, Period 1,', 108.5), spill: 8 },
  { n: 10, parts: [['T0706142874714', 126], ['      ', 28], ['0000000009000000937976', 198]], spill: 7 },
  { n: 11, parts: record('V', '05122017', '122', '000000015000', 'Pipe Incorporat', 112.5), spill: 8 },
  { n: 12, parts: [], spill: 1 },
];

function Row({ row }: { row: SheetRow }) {
  const head =
    row.n === 1 ? 'bg-[#9fd5b7] text-black' : row.n === 2 ? 'bg-[#d2d2d2] text-[#217346]' : 'bg-[#e6e6e6] text-[#222]';
  return (
    <div className="flex h-6">
      <div className={`flex w-[35px] shrink-0 items-center justify-center border-r border-b border-r-[#999] border-b-[#ababab] ${head}`}>
        <Fit w={row.n > 9 ? 17 : 8.500}>{String(row.n)}</Fit>
      </div>
      <div
        className="flex shrink-0 items-center border-r border-b border-[#d4d4d4] pl-[3px] text-black"
        style={{ width: row.spill * 80 }}
      >
        <CellText parts={row.parts} />
      </div>
      {columns.slice(row.spill).map((c) => (
        <div key={c} className="w-20 shrink-0 border-r border-b border-[#d4d4d4]" />
      ))}
      <div className="w-5 shrink-0 border-r border-b border-r-[#999] border-b-[#d4d4d4]" />
    </div>
  );
}

function Sheet() {
  return (
    <div className="mt-[12px] flex h-[295px] overflow-hidden">
      <div className="relative w-[1895px] shrink-0 bg-white font-['Lato',sans-serif] text-[15.500px]">
        <div className="flex h-6 border-b border-[#999] bg-[#e6e6e6] text-black">
          <div className="w-[35px] shrink-0 border-r border-[#ababab]">
            <Icon box="15 283 17 16" className="mt-[4px] ml-[15px]">
              <path d="M31 283v15H15z" fill="#b5b5b5" />
            </Icon>
          </div>
          {columns.map((c, i) => (
            <div
              key={c}
              className={
                i === 0
                  ? 'flex h-6 w-20 shrink-0 items-center justify-center border-r border-b-2 border-r-[#ababab] border-b-[#217346] bg-[#d2d2d2] pt-[3px] text-[#217346]'
                  : 'flex w-20 shrink-0 items-center justify-center bg-linear-to-b from-[#d0d0d0] to-[#999] bg-[length:1px_100%] bg-right bg-no-repeat pt-[2px]'
              }
            >
              {c}
            </div>
          ))}
        </div>
        {rows.map((r) => (
          <Row key={r.n} row={r} />
        ))}
        <div className="absolute top-[46px] left-[34px] h-[27px] w-[82px] border-2 border-[#217346] shadow-[inset_0_0_0_2px_#fff]" />
        <div className="absolute top-[68px] left-[111px] size-[6px] border-t border-l border-white bg-[#217346]" />
      </div>
      <div className="ml-[3px] flex w-[7px] flex-col pt-[2px]">
        <div className="flex h-[19px] items-center border border-r-0 border-[#ababab] bg-white pl-[4px]">
          <Icon box="0 0 6 4"><path d="M0 4h6L3 0z" fill="#666" /></Icon>
        </div>
        <div className="mt-px flex-1 border-t border-l border-[#ababab] bg-white" />
      </div>
    </div>
  );
}

export default function App() {
  return (
    <div className="h-[573px] w-[1905px] overflow-hidden bg-[#e6e6e6] font-['Open_Sans',sans-serif]">
      <TitleBar />
      <Tabs />
      <Ribbon />
      <QuickAccess />
      <FormulaBar />
      <Sheet />
    </div>
  );
}
